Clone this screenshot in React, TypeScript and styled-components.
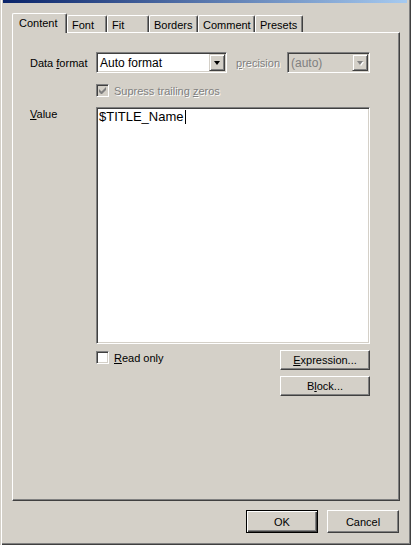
import React from 'react';
import styled, { createGlobalStyle } from 'styled-components';

// Win2000 palette
const FACE = '#d4d0c8';
const SHADOW = '#808080';
const DARK = '#404040';

const GlobalStyle = createGlobalStyle`
 html, body {
 margin: 0;
 padding: 0;
 background: ${FACE};
 overflow: hidden;
 }
 body {
 font-family: 'Liberation Sans', Arial, sans-serif;
 font-size: 11px;
 color: #000;
 }
`;

const Window = styled.div`
 width: 411px;
 height: 545px;
 box-sizing: border-box;
 display: flex;
 flex-direction: column;
 background: ${FACE};
 box-shadow: inset 1px 0 ${FACE}, inset 2px 0 #fff, inset -1px -1px ${DARK},
 inset -2px -2px ${SHADOW};
`;

const TitleBar = styled.div`
 height: 3px;
 margin: 0 4px 0 3px;
 background: linear-gradient(to right, #0a246a, #a6caf0);
`;

const Body = styled.div`
 display: flex;
 flex-direction: column;
 padding: 10px 11px 0 12px;
`;

const TabRow = styled.div`
 display: flex;
 align-items: flex-end;
 height: 19px;
`;

const Tab = styled.div<{ $w: number; $active?: boolean }>`
 position: relative;
 z-index: ${(p) => (p.$active ? 1 : 0)};
 box-sizing: border-box;
 width: ${(p) => p.$w}px;
 height: ${(p) => (p.$active ? 20 : 17)}px;
 margin-bottom: ${(p) => (p.$active ? -1 : 0)}px;
 padding: ${(p) => (p.$active ? '0 0 1px 6px' : '1px 0 0 4px')};
 display: flex;
 align-items: center;
 background: ${FACE};
 border-top: 1px solid #fff;
 border-left: 1px solid #fff;
 border-right: 1px solid ${DARK};
 border-radius: 2px 2px 0 0;
 box-shadow: inset -1px 0 ${SHADOW};
 white-space: nowrap;
`;

const Panel = styled.div`
 box-sizing: border-box;
 height: 469px;
 display: flex;
 flex-direction: column;
 padding: 19px 29px 0 17px;
 border-top: 1px solid #fff;
 border-left: 1px solid #fff;
 border-right: 1px solid ${DARK};
 border-bottom: 1px solid ${DARK};
 box-shadow: inset -1px -1px ${SHADOW};
`;

const FormatRow = styled.div`
 display: flex;
 align-items: center;
 height: 21px;
`;

const Label = styled.div<{ $w: number; $disabled?: boolean; $gap?: number }>`
 flex: none;
 width: ${(p) => p.$w}px;
 margin-left: ${(p) => p.$gap ?? 0}px;
 color: ${(p) => (p.$disabled ? SHADOW : '#000')};
 text-shadow: ${(p) => (p.$disabled ? '1px 1px #fff' : 'none')};
 white-space: nowrap;
`;

const Select = styled.div<{ $w: number; $disabled?: boolean }>`
 flex: none;
 box-sizing: border-box;
 width: ${(p) => p.$w}px;
 height: 21px;
 padding: 1px;
 display: flex;
 align-items: stretch;
 background: ${(p) => (p.$disabled ? FACE : '#fff')};
 border: 1px solid;
 border-color: ${SHADOW} #fff #fff ${SHADOW};
 box-shadow: inset 1px 1px ${DARK}, inset -1px -1px ${FACE};
`;

const SelectValue = styled.div<{ $disabled?: boolean }>`
 flex: 1;
 display: flex;
 align-items: center;
 padding-left: 2px;
 color: ${(p) => (p.$disabled ? SHADOW : '#000')};
 font-size: 12px;
`;

const ArrowButton = styled.div`
 flex: none;
 box-sizing: border-box;
 width: 16px;
 display: flex;
 align-items: center;
 justify-content: center;
 background: ${FACE};
 border: 1px solid;
 border-color: ${FACE} ${DARK} ${DARK} ${FACE};
 box-shadow: inset 1px 1px #fff, inset -1px -1px ${SHADOW};
`;

const Triangle = styled.div<{ $disabled?: boolean }>`
 width: 0;
 height: 0;
 margin-top: 1px;
 border-left: 3.5px solid transparent;
 border-right: 3.5px solid transparent;
 border-top: 4px solid ${(p) => (p.$disabled ? SHADOW : '#000')};
 filter: ${(p) => (p.$disabled ? 'drop-shadow(1px 1px 0 #fff)' : 'none')};
`;

const CheckRow = styled.div<{ $top: number }>`
 display: flex;
 align-items: center;
 gap: 5px;
 margin: ${(p) => p.$top}px 0 0 66px;
`;

const CheckBox = styled.div<{ $disabled?: boolean }>`
 flex: none;
 box-sizing: border-box;
 width: 13px;
 height: 13px;
 display: flex;
 align-items: center;
 justify-content: center;
 background: ${(p) => (p.$disabled ? FACE : '#fff')};
 border: 1px solid;
 border-color: ${SHADOW} #fff #fff ${SHADOW};
 box-shadow: inset 1px 1px ${DARK}, inset -1px -1px ${FACE};
`;

const ValueRow = styled.div`
 display: flex;
 margin-top: 10px;
`;

const TextBox = styled.div`
 flex: none;
 box-sizing: border-box;
 width: 274px;
 height: 237px;
 padding: 1px 2px;
 background: #fff;
 border: 1px solid;
 border-color: ${SHADOW} #fff #fff ${SHADOW};
 box-shadow: inset 1px 1px ${DARK}, inset -1px -1px ${FACE};
 font-size: 13px;
 line-height: 15px;
`;

const Caret = styled.span`
 display: inline-block;
 width: 1px;
 height: 14px;
 margin-left: 1px;
 vertical-align: -3px;
 background: #000;
`;

const ActionRow = styled.div`
 display: flex;
 align-items: flex-start;
 justify-content: space-between;
 margin-top: 6px;
`;

const SideButtons = styled.div`
 display: flex;
 flex-direction: column;
 gap: 6px;
`;

const Button = styled.div<{ $w: number; $h: number; $default?: boolean }>`
 box-sizing: border-box;
 width: ${(p) => p.$w}px;
 height: ${(p) => p.$h}px;
 display: flex;
 align-items: center;
 justify-content: center;
 background: ${FACE};
 border: 1px solid;
 border-color: ${(p) => (p.$default ? '#000' : `#fff ${DARK} ${DARK} #fff`)};
 box-shadow: ${(p) =>
 p.$default
 ? `inset 1px 1px #fff, inset -1px -1px ${DARK}, inset -2px -2px ${SHADOW}`
 : `inset -1px -1px ${SHADOW}`};
`;

const Footer = styled.div`
 display: flex;
 justify-content: flex-end;
 gap: 9px;
 margin: 9px 1px 0 0;
`;

const tabs = [
 { name: 'Content', w: 55, active: true },
 { name: 'Font', w: 40 },
 { name: 'Fit', w: 42 },
 { name: 'Borders', w: 49 },
 { name: 'Comment', w: 57 },
 { name: 'Presets', w: 48 },
];

const Check: React.FC<{ color: string }> = ({ color }) => (
 <svg width="7" height="7" viewBox="0 0 7 7">
 <path d="M0 2v3l2 2h1l4-4V0L2.5 4.5z" fill={color} />
 </svg>
);

const App: React.FC = () => (
 <>
 <GlobalStyle />
 <Window>
 <TitleBar />
 <Body>
 <TabRow>
 {tabs.map((t) => (
 <Tab key={t.name} $w={t.w} $active={t.active}>
 {t.name}
 </Tab>
 ))}
 </TabRow>

 <Panel>
 <FormatRow>
 <Label $w={66}>
 Data <u>f</u>ormat
 </Label>
 <Select $w={131}>
 <SelectValue>Auto format</SelectValue>
 <ArrowButton>
 <Triangle />
 </ArrowButton>
 </Select>
 <Label $w={51} $gap={9} $disabled>
 <u>p</u>recision
 </Label>
 <Select $w={83} $disabled>
 <SelectValue $disabled>(auto)</SelectValue>
 <ArrowButton>
 <Triangle $disabled />
 </ArrowButton>
 </Select>
 </FormatRow>

 <CheckRow $top={11}>
 <CheckBox $disabled>
 <Check color={SHADOW} />
 </CheckBox>
 <Label $w={200} $disabled>
 Supress trailing <u>z</u>eros
 </Label>
 </CheckRow>

 <ValueRow>
 <Label $w={66} style={{ paddingTop: 1 }}>
 <u>V</u>alue
 </Label>
 <TextBox>
 $TITLE_Name
 <Caret />
 </TextBox>
 </ValueRow>

 <ActionRow>
 <CheckRow $top={1}>
 <CheckBox />
 <span>
 <u>R</u>ead only
 </span>
 </CheckRow>
 <SideButtons>
 <Button $w={90} $h={20}>
 <span>
 <u>E</u>xpression...
 </span>
 </Button>
 <Button $w={90} $h={20}>
 <span>
 B<u>l</u>ock...
 </span>
 </Button>
 </SideButtons>
 </ActionRow>
 </Panel>

 <Footer>
 <Button $w={72} $h={23} $default>
 OK
 </Button>
 <Button $w={72} $h={23}>
 Cancel
 </Button>
 </Footer>
 </Body>
 </Window>
 </>
);

export default App;
